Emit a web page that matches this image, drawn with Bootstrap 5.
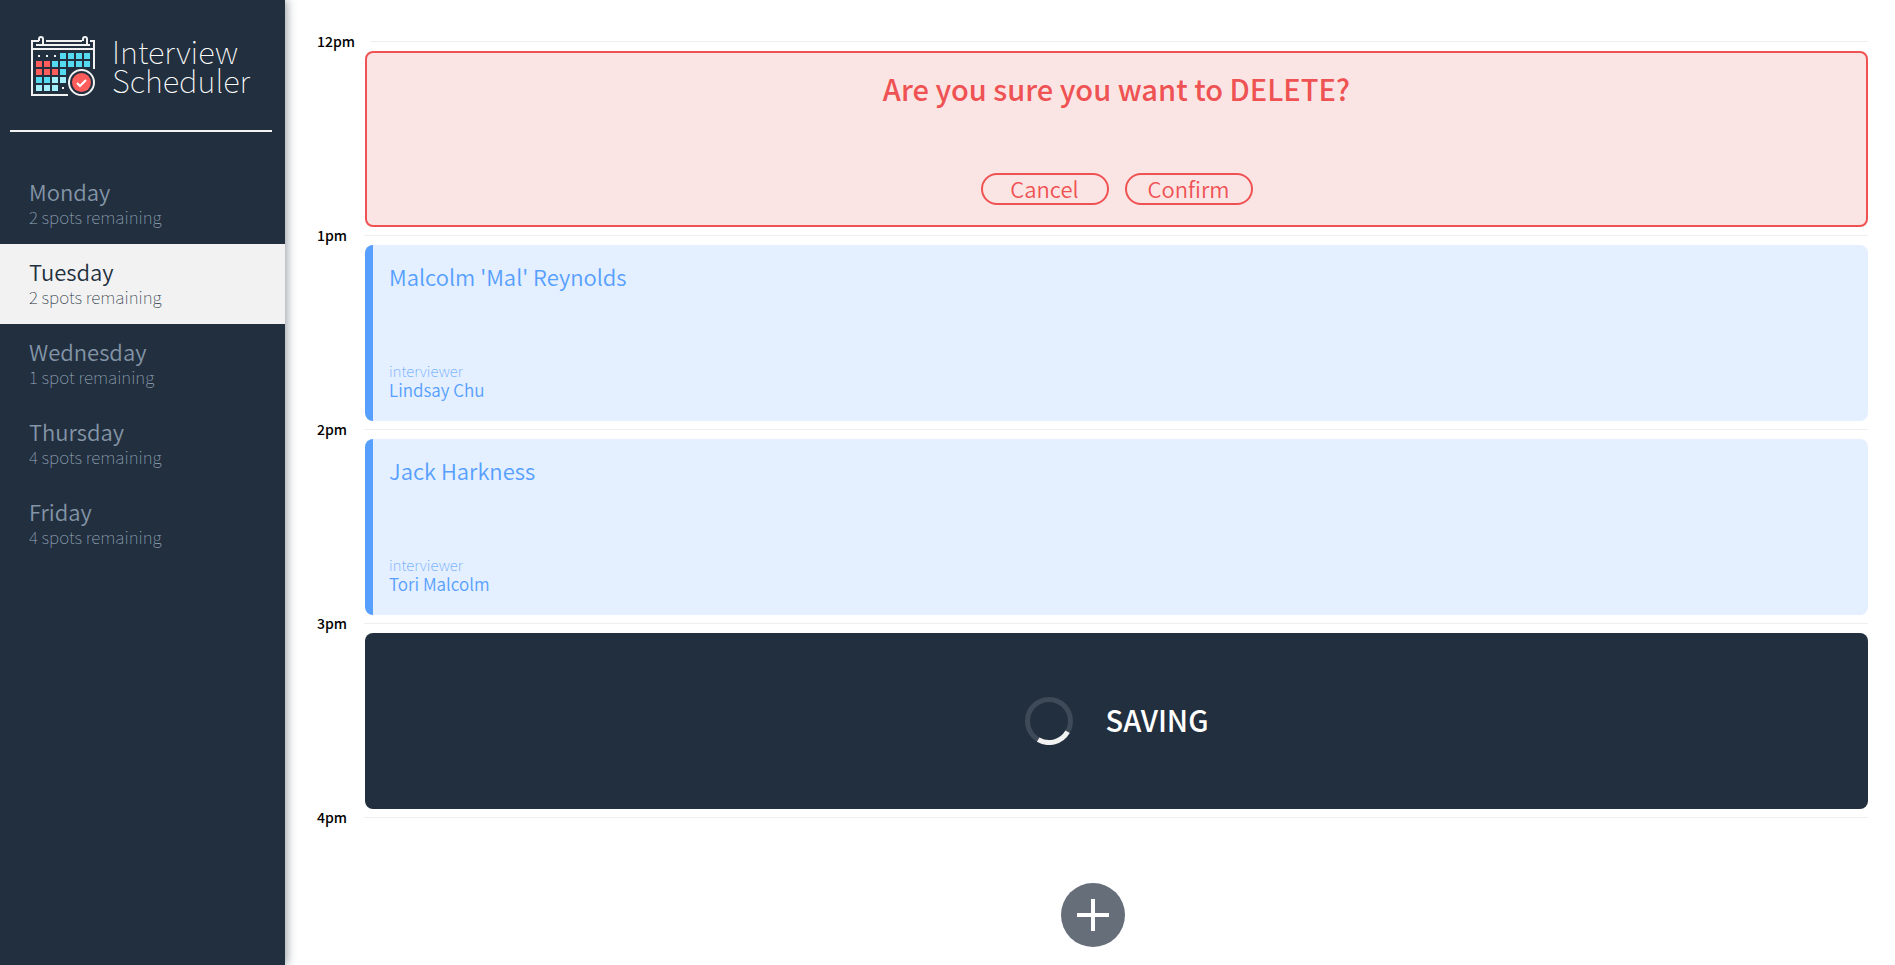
<!DOCTYPE html>
<html lang="en">
<head>
<meta charset="utf-8">
<meta name="viewport" content="width=device-width, initial-scale=1">
<title>Interview Scheduler</title>
<link href="https://cdn.jsdelivr.net/npm/bootstrap@5.3.0/dist/css/bootstrap.min.css" rel="stylesheet">
<style>
  :root { --navy: #222f3e; --paper: #f2f2f2; --danger: #ef5253; --sky: #579fff; }
  body { font-family: "Noto Sans CJK SC", "Noto Sans CJK JP", sans-serif; font-size: 16px; line-height: 20px; color: #000; background: #fff; }
  .sidebar { flex: 0 0 285px; background: var(--navy); box-shadow: 2px 0 9px rgba(34, 47, 62, .45); padding-top: 36px; }
  .brand { padding-left: 31px; gap: 17px; }
  .brand-name { font-size: 31px; line-height: 29px; font-weight: 100; color: #fff; margin: 0; padding-bottom: 2px; }
  .divider { height: 2px; margin: 34px 13px 32px 10px; background: var(--paper); border: 0; opacity: 1; }
  .day { display: block; height: 80px; padding: 13px 29px; color: #8395a7; text-decoration: none; }
  .day.active { background: var(--paper); color: var(--navy); }
  .day-name { font-size: 22px; line-height: 28px; font-weight: 350; }
  .day-spots { font-size: 17px; line-height: 23px; font-weight: 100; color: #9aacbf; }
  .active .day-spots { color: var(--navy); }
  .schedule { padding: 33px 27px 16px 32px; min-width: 0; }
  .hour { height: 18px; padding-bottom: 2px; font-size: 14px; line-height: 16px; font-weight: 500; }
  .hour time { flex: none; min-width: 47px; padding-right: 16px; }
  .hour hr { flex: 1; margin: 0; border-top: 1px solid #eee; opacity: 1; }
  .slot { height: 176px; margin-left: 48px; border-radius: 8px; }
  .slot-confirm { border: 2px solid var(--danger); background: #fbe5e4; color: var(--danger); padding: 18px 0 20px; }
  .slot-title { font-size: 29px; line-height: 34px; font-weight: 500; margin: 0; }
  .btn-pill { width: 128px; height: 32px; padding: 0 0 2px; border: 2px solid var(--danger); border-radius: 16px; color: var(--danger); font-size: 22px; line-height: 26px; font-weight: 350; }
  .btn-pill:hover { background: var(--danger); color: #fff; }
  .slot-booked { background: #e4f0ff; border-left: 8px solid var(--sky); color: var(--sky); padding: 17px 16px 21px; }
  .student { font-size: 22px; line-height: 28px; font-weight: 350; margin: 0; }
  .caption { font-size: 15px; line-height: 18px; font-weight: 100; }
  .interviewer { font-size: 17px; line-height: 20px; font-weight: 350; }
  .slot-status { background: var(--navy); color: #fff; gap: 33px; }
  .slot-status .slot-title { padding-bottom: 4px; }
  .add { width: 64px; height: 64px; margin-top: 56px; background: #666e79; }
</style>
</head>
<body>
<div class="d-flex min-vh-100">
  <aside class="sidebar position-relative">
    <header class="brand d-flex align-items-center">
      <svg width="64" height="60" viewBox="0 0 64 60" fill="none" aria-hidden="true">
        <g stroke="#f2f2f2" stroke-width="2">
          <path d="M8 5H1V59H37M15 5H51M59 5H63V33M5 9H59M1 13H63"/>
          <path d="M8 5V3a2 2 0 0 1 4 0V8M52 5V3a2 2 0 0 1 4 0V8"/>
        </g>
        <path fill="#f2f2f2" d="M7 19h2v2H7zM15 19h2v2h-2zM23 19h2v2h-2zM31 51h2v2h-2z"/>
        <path fill="#54dbf2" d="M29 17h6v6h-6zM37 17h6v6h-6zM45 17h6v6h-6zM53 17h6v6h-6zM21 25h6v6h-6zM29 25h6v6h-6zM37 25h6v6h-6zM45 25h6v6h-6zM53 25h6v6h-6zM29 33h6v6h-6zM5 41h6v6H5zM13 41h6v6h-6z"/>
        <path fill="#a3effb" d="M21 41h6v6h-6zM29 41h6v6h-6zM5 49h6v6H5zM13 49h6v6h-6zM21 49h6v6h-6z"/>
        <path fill="#ff5c5c" d="M5 25h6v6H5zM13 25h6v6h-6zM5 33h6v6H5zM13 33h6v6h-6zM21 33h6v6h-6z"/>
        <circle cx="50.500" cy="46.500" r="12.500" fill="#222f3e" stroke="#f2f2f2" stroke-width="2"/>
        <circle cx="50.500" cy="46.500" r="9.500" fill="#ff5c5c"/>
        <path d="M46 47l3 3 6-6" stroke="#fff" stroke-width="2"/>
      </svg>
      <h1 class="brand-name">Interview<br>Scheduler</h1>
    </header>
    <hr class="divider">
    <nav aria-label="Days">
      <a class="day" href="#"><div class="day-name">Monday</div><div class="day-spots">2 spots remaining</div></a>
      <a class="day active" href="#" aria-current="page"><div class="day-name">Tuesday</div><div class="day-spots">2 spots remaining</div></a>
      <a class="day" href="#"><div class="day-name">Wednesday</div><div class="day-spots">1 spot remaining</div></a>
      <a class="day" href="#"><div class="day-name">Thursday</div><div class="day-spots">4 spots remaining</div></a>
      <a class="day" href="#"><div class="day-name">Friday</div><div class="day-spots">4 spots remaining</div></a>
    </nav>
  </aside>

  <main class="schedule flex-grow-1">
    <div class="hour d-flex align-items-center"><time>12pm</time><hr></div>
    <section class="slot slot-confirm d-flex flex-column align-items-center justify-content-between">
      <h2 class="slot-title">Are you sure you want to DELETE?</h2>
      <div class="d-flex gap-3">
        <button type="button" class="btn btn-pill">Cancel</button>
        <button type="button" class="btn btn-pill">Confirm</button>
      </div>
    </section>

    <div class="hour d-flex align-items-center"><time>1pm</time><hr></div>
    <article class="slot slot-booked d-flex flex-column justify-content-between">
      <h2 class="student">Malcolm 'Mal' Reynolds</h2>
      <div><div class="caption">interviewer</div><div class="interviewer">Lindsay Chu</div></div>
    </article>

    <div class="hour d-flex align-items-center"><time>2pm</time><hr></div>
    <article class="slot slot-booked d-flex flex-column justify-content-between">
      <h2 class="student">Jack Harkness</h2>
      <div><div class="caption">interviewer</div><div class="interviewer">Tori Malcolm</div></div>
    </article>

    <div class="hour d-flex align-items-center"><time>3pm</time><hr></div>
    <section class="slot slot-status d-flex align-items-center justify-content-center" role="status">
      <svg width="48" height="48" viewBox="0 0 48 48" fill="none" stroke-width="5" aria-hidden="true">
        <circle cx="24" cy="24" r="21.500" stroke="#3e4a57"/>
        <path d="M42.600 34.800A21.500 21.500 0 0 1 13.200 42.600" stroke="#f2f2f2"/>
      </svg>
      <h2 class="slot-title">SAVING</h2>
    </section>

    <div class="hour d-flex align-items-center"><time>4pm</time><hr></div>
    <button type="button" class="add btn rounded-circle border-0 p-0 d-flex align-items-center justify-content-center mx-auto" aria-label="Add appointment">
      <svg width="32" height="32" viewBox="0 0 32 32" stroke="#fff" stroke-width="4" aria-hidden="true"><path d="M16 0V32M0 16H32"/></svg>
    </button>
  </main>
</div>
<script src="https://cdn.jsdelivr.net/npm/bootstrap@5.3.0/dist/js/bootstrap.bundle.min.js"></script>
</body>
</html>
